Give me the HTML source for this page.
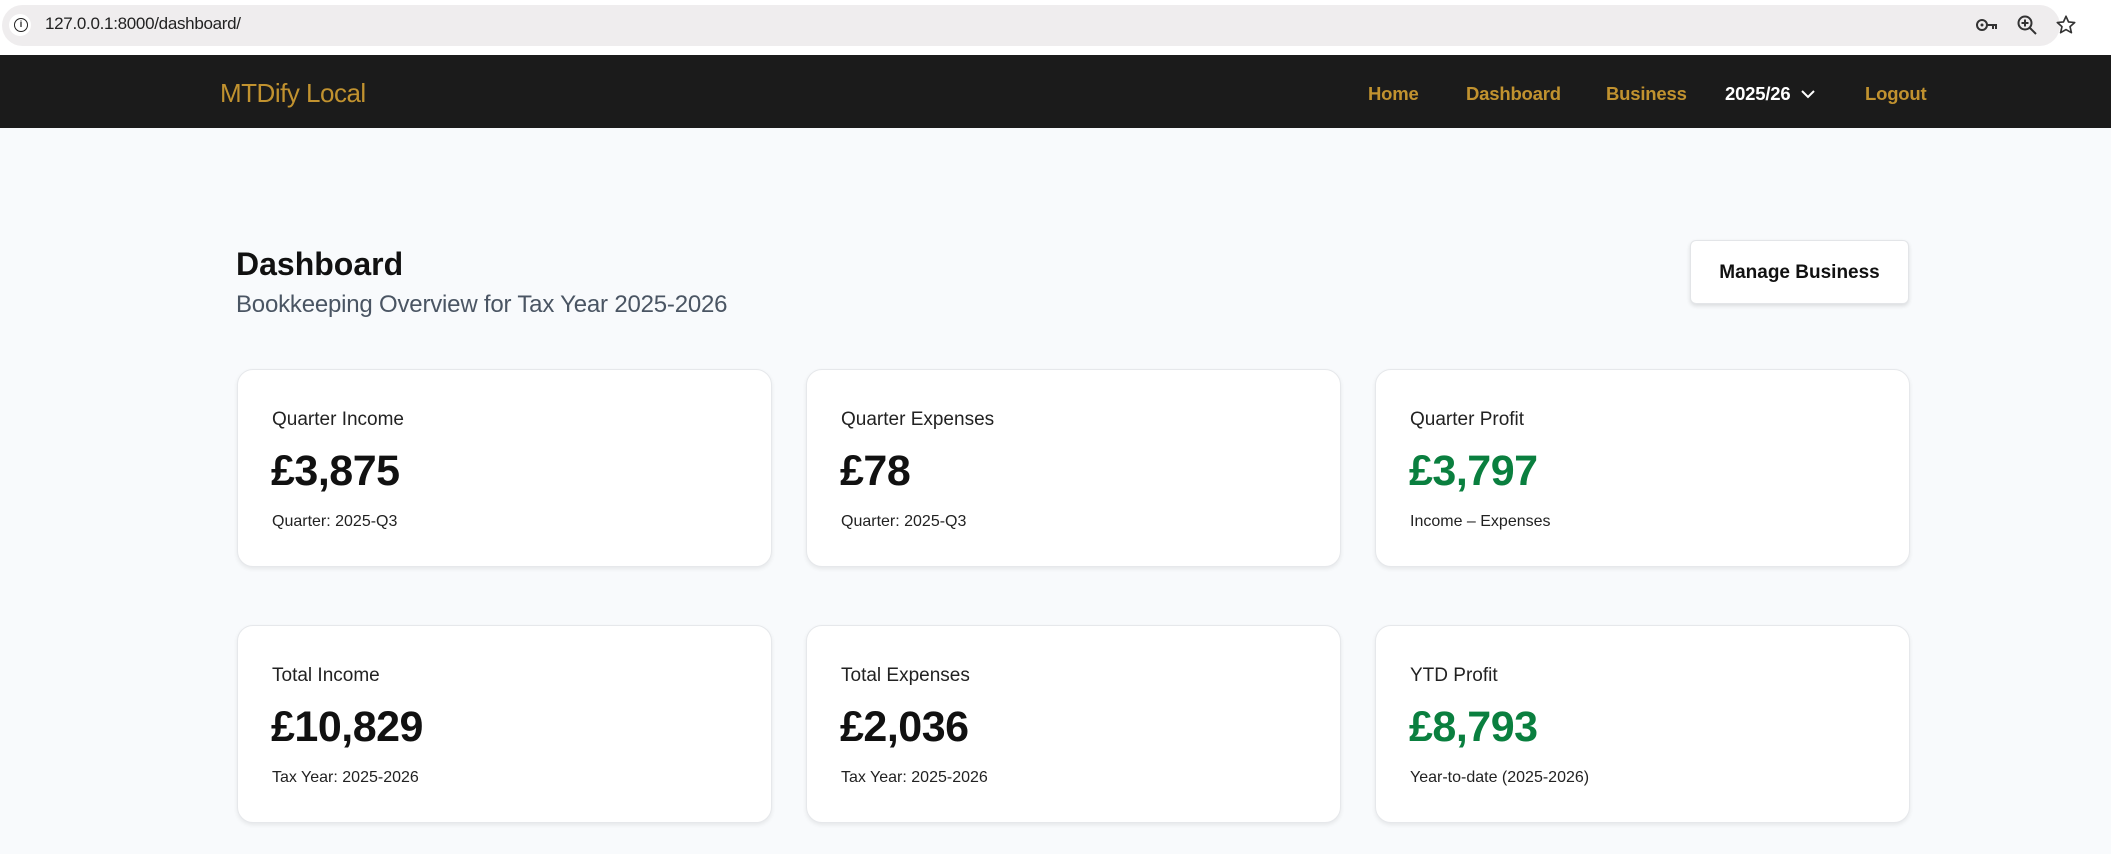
<!DOCTYPE html>
<html><head><meta charset="utf-8"><style>
*{box-sizing:border-box;margin:0;padding:0}
body{width:2111px;height:854px;overflow:hidden;background:#f8fafc;font-family:"Liberation Sans",sans-serif;position:relative}
.chrome{position:absolute;left:0;top:0;width:2111px;height:55px;background:#fff}
.pill{position:absolute;left:2px;top:5px;width:2058px;height:41px;background:#efedee;border-radius:21px}
.info{position:absolute;left:9px;top:14px;width:22px;height:22px;border-radius:50%;background:#fff}
.info:after{content:"i";position:absolute;left:5px;top:4px;width:12px;height:12px;border:1.6px solid #222;border-radius:50%;font-size:9px;font-weight:bold;text-align:center;line-height:10px;color:#222}
.url{position:absolute;left:45px;top:14px;font-size:17px;color:#222;letter-spacing:-0.3px}
.nav{position:absolute;left:0;top:55px;width:2111px;height:73px;background:#1b1b1b}
.logo{position:absolute;left:220px;top:23px;font-size:26px;color:#c1922f;letter-spacing:-0.5px}
.nl{position:absolute;top:28px;font-size:18.5px;font-weight:bold;color:#c1922f;letter-spacing:-0.2px}
h1{position:absolute;left:236px;top:246px;font-size:32px;font-weight:bold;color:#111}
.sub{position:absolute;left:236px;top:291px;font-size:24px;color:#4a5563;letter-spacing:-0.2px}
.btn{position:absolute;left:1690px;top:240px;width:219px;height:64px;background:#fff;border:1px solid #e3e5e8;border-radius:6px;box-shadow:0 2px 4px rgba(0,0,0,.12);font-size:19px;font-weight:bold;color:#111;text-align:center;line-height:64px}
.card{position:absolute;width:535px;height:198px;background:#fff;border:1px solid #e6e8eb;border-radius:16px;box-shadow:0 2px 4px rgba(0,0,0,.08)}
.lab{position:absolute;left:34px;top:39px;font-size:19px;color:#222}
.val{position:absolute;left:33px;top:77px;font-size:43px;font-weight:bold;color:#111;letter-spacing:-0.5px}
.g{color:#0a7f3f}
.s{position:absolute;left:34px;top:143px;font-size:16px;color:#222}
</style></head><body>
<div class="chrome"><div class="pill"></div><div class="info"></div><div class="url">127.0.0.1:8000/dashboard/</div>
<svg style="position:absolute;left:1975px;top:15px" width="24" height="20" viewBox="0 0 24 20"><circle cx="7" cy="10" r="5" fill="none" stroke="#333" stroke-width="2"/><circle cx="7" cy="10" r="1.5" fill="#333"/><path d="M12 10h10M18 10v4M21 10v4" stroke="#333" stroke-width="2" fill="none"/></svg>
<svg style="position:absolute;left:2016px;top:14px" width="22" height="22" viewBox="0 0 22 22"><circle cx="9" cy="9" r="6.5" fill="none" stroke="#333" stroke-width="2"/><path d="M14 14l6 6M9 5.5v7M5.5 9h7" stroke="#333" stroke-width="2"/></svg>
<svg style="position:absolute;left:2055px;top:14px" width="22" height="22" viewBox="0 0 24 24"><path d="M12 2.5l2.8 6.2 6.7.6-5.1 4.5 1.5 6.6L12 17l-5.9 3.4 1.5-6.6L2.5 9.3l6.7-.6z" fill="none" stroke="#333" stroke-width="1.8" stroke-linejoin="round"/></svg>
</div>
<div class="nav"><div class="logo">MTDify Local</div>
<div class="nl" style="left:1368px">Home</div>
<div class="nl" style="left:1466px">Dashboard</div>
<div class="nl" style="left:1606px">Business</div>
<div class="nl" style="left:1725px;color:#fff">2025/26</div>
<svg style="position:absolute;left:1800px;top:33px" width="16" height="12" viewBox="0 0 16 12"><path d="M2 3l6 6 6-6" stroke="#fff" stroke-width="2" fill="none"/></svg>
<div class="nl" style="left:1865px">Logout</div>
</div>
<h1>Dashboard</h1>
<div class="sub">Bookkeeping Overview for Tax Year 2025-2026</div>
<div class="btn">Manage Business</div>

<div class="card" style="left:237px;top:369px"><div class="lab">Quarter Income</div><div class="val">£3,875</div><div class="s">Quarter: 2025-Q3</div></div>
<div class="card" style="left:806px;top:369px"><div class="lab">Quarter Expenses</div><div class="val">£78</div><div class="s">Quarter: 2025-Q3</div></div>
<div class="card" style="left:1375px;top:369px"><div class="lab">Quarter Profit</div><div class="val g">£3,797</div><div class="s">Income – Expenses</div></div>
<div class="card" style="left:237px;top:625px"><div class="lab">Total Income</div><div class="val">£10,829</div><div class="s">Tax Year: 2025-2026</div></div>
<div class="card" style="left:806px;top:625px"><div class="lab">Total Expenses</div><div class="val">£2,036</div><div class="s">Tax Year: 2025-2026</div></div>
<div class="card" style="left:1375px;top:625px"><div class="lab">YTD Profit</div><div class="val g">£8,793</div><div class="s">Year-to-date (2025-2026)</div></div>
</body></html>
